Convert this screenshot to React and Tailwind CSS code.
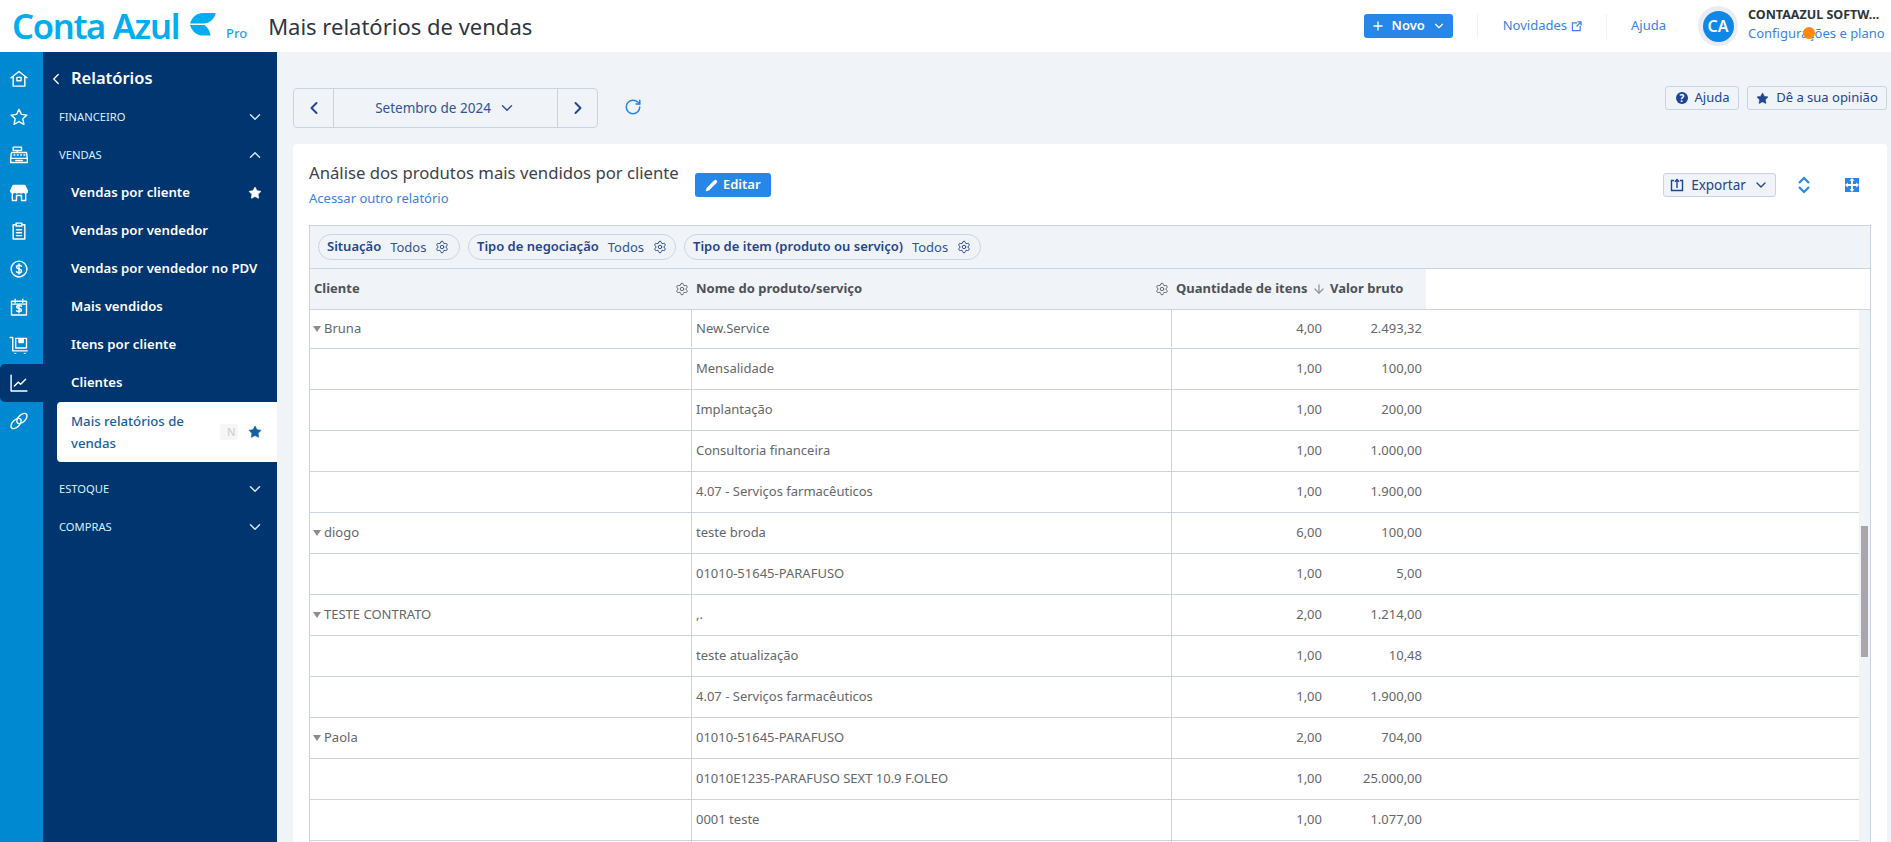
import React from "react";
import { ChevronDown, ChevronLeft, ChevronRight, ChevronUp, Plus, RotateCw, Settings, Star, ArrowDown, Pencil } from "lucide-react";

const S = ({ children, size = 20 }) => (
  <svg width={size} height={size} viewBox="0 0 24 24" fill="none" stroke="currentColor" strokeWidth="1.7" strokeLinejoin="round" strokeLinecap="round">{children}</svg>
);

const railIcons = [
  <S key="h"><path d="M2.5 10.5 12 3l9.5 7.5M5 9v11.500h14V9" /><rect x="9.500" y="10" width="5" height="4" /></S>,
  <S key="s"><path d="m12 2.800 2.900 6.100 6.600.8-4.900 4.500 1.300 6.600L12 17.500l-5.900 3.300 1.300-6.600L2.500 9.700l6.600-.8z" /></S>,
  <S key="c"><rect x="5" y="2.500" width="10" height="4" /><path d="M10 6.500v2.500M3 9h18l1 7H2zM2 16v5h20v-5M6 12h1M10 12h1M14 12h1M18 12h1M8 18.500h8" /></S>,
  <S key="m"><path d="M5 3h14l3 6.500c0 1.500-1.500 2.500-2.500 2.500S17 11 17 9.800c0 1.200-1.500 2.200-2.500 2.200S12 11 12 9.800C12 11 10.500 12 9.500 12S7 11 7 9.800C7 11 5.500 12 4.500 12S2 11 2 9.500z" fill="currentColor" /><path d="M4 12v9h5v-6h6v6h5v-9" /></S>,
  <S key="p"><path d="M8.500 4.500H5v17h14v-17h-3.500" /><rect x="8.500" y="2.500" width="7" height="3.500" /><path d="M9 10.500h6M9 14h6M9 17.500h6" /></S>,
  <S key="d"><circle cx="12" cy="12" r="9.500" /><path d="M15 8.800c-.6-1-1.700-1.300-3-1.300-1.600 0-3 .8-3 2.200 0 3 6 1.600 6 4.600 0 1.400-1.400 2.200-3 2.200-1.400 0-2.500-.4-3.100-1.400M12 6v12" /></S>,
  <S key="k"><rect x="3" y="5" width="18" height="16.500" /><path d="M7.500 2.500v4M16.500 2.500v4M3 8.500h18M15 11.200c-.6-.7-1.700-1-3-1-1.600 0-2.800.7-2.800 1.800 0 2.600 5.800 1.100 5.800 3.700 0 1.100-1.300 1.800-2.900 1.800-1.300 0-2.500-.4-3.100-1.100M12 9v10" /></S>,
  <S key="t"><path d="M1.500 3H4.500V19H22" /><rect x="8" y="4" width="13" height="11.500" /><path d="M12 4v5h5V4" fill="currentColor" /><path d="M7 22h1M18.500 22h1" /></S>,
  <S key="l"><path d="M2.500 2.500V21.500h19" /><path d="m6.500 15.500 4.500-4.500 3 2.500 6-6" /></S>,
  <S key="o"><ellipse cx="8.500" cy="15" rx="7.500" ry="4.300" transform="rotate(-45 8.500 15)" /><ellipse cx="15.500" cy="9" rx="7.500" ry="4.300" transform="rotate(-45 15.500 9)" /></S>,
];

const Gear = ({ className = "" }) => <Settings size={14} strokeWidth={1.6} className={className} />;

const Pill = ({ label, w }) => (
  <div className={`${w} h-[26px] rounded-full border border-[#c9d4e2] flex items-center pl-[8px] gap-[9px] text-[13px] text-[#23468f]`}>
    <span className="font-semibold whitespace-nowrap">{label}</span>
    <span className="text-[#2f5597] whitespace-nowrap mt-[1px]">Todos</span>
    <Gear className="shrink-0" />
  </div>
);

const NavSection = ({ label, open }) => (
  <div className="h-[38px] pl-[16px] pr-[13px] flex items-center justify-between text-[11.200px] text-[#d7f2ff] font-normal">
    <span>{label}</span>
    {open ? <ChevronUp size={18} className="text-[#cfe8f8]" /> : <ChevronDown size={18} className="text-[#cfe8f8]" />}
  </div>
);

const NavItem = ({ label, star }) => (
  <div className="h-[38px] pl-[28px] pr-[15px] flex items-center justify-between text-[13.200px] font-semibold text-white">
    <span>{label}</span>
    {star && <Star size={14} fill="currentColor" strokeWidth={1} />}
  </div>
);

const rows = [
  ["Bruna", "New.Service", "4,00", "2.493,32"],
  ["", "Mensalidade", "1,00", "100,00"],
  ["", "Implantação", "1,00", "200,00"],
  ["", "Consultoria financeira", "1,00", "1.000,00"],
  ["", "4.07 - Serviços farmacêuticos", "1,00", "1.900,00"],
  ["diogo", "teste broda", "6,00", "100,00"],
  ["", "01010-51645-PARAFUSO", "1,00", "5,00"],
  ["TESTE CONTRATO", ",.", "2,00", "1.214,00"],
  ["", "teste atualização", "1,00", "10,48"],
  ["", "4.07 - Serviços farmacêuticos", "1,00", "1.900,00"],
  ["Paola", "01010-51645-PARAFUSO", "2,00", "704,00"],
  ["", "01010E1235-PARAFUSO SEXT 10.9 F.OLEO", "1,00", "25.000,00"],
  ["", "0001 teste", "1,00", "1.077,00"],
  ["", "", "", ""],
];

export default function App() {
  return (
    <div className="w-[1891px] h-[842px] overflow-hidden flex flex-col bg-[#f0f3f8] font-['Noto_Sans',sans-serif]">
      {/* top bar */}
      <header className="h-[52px] shrink-0 bg-white flex items-center pl-[12px]">
        <span className="w-[178px] text-[34.500px] leading-none font-semibold text-[#00aeef] tracking-[-1.3px] whitespace-nowrap">Conta Azul</span>
        <svg width="26" height="25" viewBox="0 0 26 25" className="mb-[3px] text-[#00aeef]" fill="currentColor">
          <path d="M0 11.500C2 5 7 1 13 1L25.500 1C25 6 20 11.500 14 11.500Z" />
          <path d="M0 13L14.500 13C17 14.500 20 19 20.500 23.500L12 23.500C6 23.500 1.500 18 0 13Z" />
        </svg>
        <span className="ml-[10px] mt-[16px] text-[13px] font-medium text-[#1ea4de]">Pro</span>
        <h1 className="ml-[21px] text-[22px] font-normal text-[#2f3640] whitespace-nowrap">Mais relatórios de vendas</h1>
        <div className="ml-auto flex items-center">
          <button className="w-[89px] h-[24px] rounded-[3px] bg-[#2687e9] text-white flex items-center justify-center text-[13px] font-semibold gap-[7px]">
            <Plus size={14} strokeWidth={2.2} /> Novo <ChevronDown size={14} />
          </button>
          <div className="w-px h-[24px] bg-[#eef1f5] ml-[24px]" />
          <span className="ml-[25px] text-[13px] text-[#3b82e0]">Novidades</span>
          <svg width="11" height="11" viewBox="0 0 12 12" fill="none" stroke="#3b82e0" strokeWidth="1.300" className="ml-[4px]"><path d="M6.500 2H1.500V10.500H10V5.500M7 1H11V5M11 1 6 6" /></svg>
          <div className="w-px h-[24px] bg-[#eef1f5] ml-[24px]" />
          <span className="ml-[24px] text-[13px] text-[#3b82e0]">Ajuda</span>
          <div className="ml-[32px] w-[40px] h-[40px] rounded-full bg-[#e9edf1] flex items-center justify-center">
            <div className="w-[31px] h-[31px] rounded-full bg-[#0f87e6] text-white text-[16px] font-semibold flex items-center justify-center">CA</div>
          </div>
          <div className="relative ml-[10px] mb-[4px] w-[143px] flex flex-col">
            <span className="text-[12.500px] font-bold leading-[18px] text-[#2d3540] whitespace-nowrap">CONTAAZUL SOFTW...</span>
            <span className="text-[13px] leading-[18px] text-[#3b82e0] whitespace-nowrap">Configurações e plano</span>
            <span className="absolute left-[55px] top-[21px] w-[12px] h-[12px] rounded-full bg-[#ff8a00]" />
          </div>
        </div>
      </header>

      <div className="flex flex-1 min-h-0">
        {/* icon rail */}
        <nav className="w-[43px] shrink-0 bg-[#0089d0] pt-[8px] text-white flex flex-col">
          {railIcons.map((ic, i) => (
            <div key={i} className={`h-[38px] flex items-center justify-center pr-[5px] ${i === 8 ? "bg-[#00356f] rounded-l-[5px]" : ""}`}>{ic}</div>
          ))}
        </nav>

        {/* menu */}
        <aside className="w-[234px] shrink-0 bg-[#00356f] pt-[8px] text-white">
          <div className="h-[38px] pl-[4px] pb-[1px] flex items-center gap-[6px] text-[16.500px] font-semibold">
            <ChevronLeft size={18} strokeWidth={1.8} />
            <span>Relatórios</span>
          </div>
          <NavSection label="FINANCEIRO" />
          <NavSection label="VENDAS" open />
          <NavItem label="Vendas por cliente" star />
          <NavItem label="Vendas por vendedor" />
          <NavItem label="Vendas por vendedor no PDV" />
          <NavItem label="Mais vendidos" />
          <NavItem label="Itens por cliente" />
          <NavItem label="Clientes" />
          <div className="ml-[14px] mb-[8px] h-[60px] bg-white rounded-l-[4px] pl-[14px] pr-[15px] flex items-center justify-between text-[13.200px] text-[#17609f] font-medium">
            <span className="w-[125px] leading-[22px]">Mais relatórios de vendas</span>
            <div className="flex items-center gap-[10px]">
              <div className="w-[18px] h-[16px] rounded-[3px] bg-[#f6f6f8] text-[11px] leading-[16px] text-[#d0d0d4] pl-[7px]">N</div>
              <Star size={14} fill="currentColor" strokeWidth={1} />
            </div>
          </div>
          <NavSection label="ESTOQUE" />
          <NavSection label="COMPRAS" />
        </aside>

        {/* content */}
        <main className="flex-1 min-w-0 pl-[16px] pr-[4px] flex flex-col">
          <div className="h-[92px] shrink-0 flex items-start pt-[34px]">
            <div className="mt-[2px] w-[305px] h-[40px] rounded-[4px] border border-[#c9d4e2] flex items-center text-[#2f5597]">
              <div className="w-[40px] h-full border-r border-[#c9d4e2] flex items-center justify-center text-[#23468f]"><ChevronLeft size={20} strokeWidth={2.4} /></div>
              <div className="flex-1 h-full flex items-center justify-center gap-[7px] text-[13.500px]">Setembro de 2024 <ChevronDown size={18} /></div>
              <div className="w-[40px] h-full border-l border-[#c9d4e2] flex items-center justify-center text-[#23468f]"><ChevronRight size={20} strokeWidth={2.4} /></div>
            </div>
            <RotateCw size={18} strokeWidth={2} className="mt-[12px] ml-[26px] text-[#2687e9]" />
            <div className="ml-auto flex gap-[8px] text-[13px] text-[#23468f]">
              <button className="w-[74px] h-[24px] rounded-[3px] border border-[#c9d4e2] flex items-center justify-center gap-[6px]">
                <svg width="14" height="14" viewBox="0 0 14 14"><circle cx="7" cy="7" r="6" fill="#1b4697" /><text x="7" y="10.500" textAnchor="middle" fontSize="10" fontWeight="700" fill="#fff">?</text></svg>
                Ajuda
              </button>
              <button className="w-[140px] h-[24px] rounded-[3px] border border-[#c9d4e2] flex items-center justify-center gap-[7px]">
                <Star size={13} fill="currentColor" strokeWidth={1} /> Dê a sua opinião
              </button>
            </div>
          </div>

          <section className="flex-1 min-h-0 bg-white rounded-t-[4px] px-[16px] flex flex-col">
            <div className="h-[81px] shrink-0 flex items-start pt-[19px]">
              <div className="flex flex-col">
                <span className="text-[16.700px] leading-[20px] text-[#3d434b] whitespace-nowrap">Análise dos produtos mais vendidos por cliente</span>
                <span className="mt-[5px] text-[13px] leading-[20px] text-[#3b82e0]">Acessar outro relatório</span>
              </div>
              <button className="ml-[16px] mt-[10px] w-[76px] h-[24px] rounded-[3px] bg-[#2687e9] text-white text-[13px] font-semibold flex items-center justify-center gap-[5px]">
                <Pencil size={13} fill="currentColor" strokeWidth={1} /> Editar
              </button>
              <div className="ml-auto mt-[10px] flex items-center">
                <button className="w-[113px] h-[24px] rounded-[3px] border border-[#c9d4e2] bg-[#f0f3f8] text-[#23468f] text-[13.500px] flex items-center justify-center gap-[7px]">
                  <svg width="14" height="14" viewBox="0 0 14 14" fill="none" stroke="#1b4697" strokeWidth="1.400"><path d="M4 2.500H1.500V12.500H12.500V2.500H10M7 10V1.500M4.800 3.700 7 1.500l2.200 2.200" /></svg>
                  Exportar <ChevronDown size={16} />
                </button>
                <svg width="14" height="18" viewBox="0 0 14 18" fill="none" stroke="#2687e9" strokeWidth="2.200" className="ml-[21px]"><path d="M2 7 7 2l5 5M2 11l5 5 5-5" /></svg>
                <svg width="14" height="14" viewBox="0 0 14 14" className="ml-[34px] mr-[12px]"><path d="M0 0H14V14H0Z" fill="#2687e9" /><path d="M7 0 9.500 2.800H4.500ZM7 14 9.500 11.200H4.500ZM0 7 2.800 4.500V9.500ZM14 7 11.200 4.500V9.500Z" fill="#fff" /><path d="M7 2V12M2 7H12" stroke="#fff" strokeWidth="1.800" /></svg>
              </div>
            </div>

            {/* table */}
            <div className="flex-1 min-h-0 border-x border-t border-[#c9d4e2] flex flex-col overflow-hidden">
              <div className="h-[43px] shrink-0 bg-[#f0f3f8] border-b border-[#c9d4e2] pl-[8px] flex items-center gap-[8px]">
                <Pill label="Situação" w="w-[142px]" />
                <Pill label="Tipo de negociação" w="w-[208px]" />
                <Pill label="Tipo de item (produto ou serviço)" w="w-[297px]" />
              </div>
              <div className="h-[41px] shrink-0 bg-white border-b border-[#c9d4e2] flex text-[13px] font-bold text-[#4d5158]">
                <div className="w-[1116px] h-full bg-[#f0f3f8] grid grid-cols-[382px_480px_155px_99px]">
                  <div className="flex items-center justify-between pl-[4px] pr-[3px]">Cliente <Gear className="text-[#5b5f66]" /></div>
                  <div className="flex items-center justify-between pl-[4px] pr-[3px]">Nome do produto/serviço <Gear className="text-[#5b5f66]" /></div>
                  <div className="flex items-center pl-[4px] gap-[5px] whitespace-nowrap">Quantidade de itens <ArrowDown size={14} className="text-[#8a8f96]" /></div>
                  <div className="flex items-center pl-[3px] whitespace-nowrap">Valor bruto</div>
                </div>
              </div>
              <div className="flex flex-1 min-h-0">
                <div className="flex-1 min-w-0 text-[13px] text-[#64676c]">
                  {rows.map((r, i) => (
                    <div key={i} className={`${i === 0 ? "h-[39px] pb-[1px]" : "h-[41px]"} border-b border-[#c9d4e2] grid grid-cols-[382px_480px_155px_99px_1fr]`}>
                      <div className="flex items-center border-r border-[#c9d4e2] pl-[3px] gap-[3px]">
                        {r[0] && <span className="w-0 h-0 border-x-[4px] border-x-transparent border-t-[6px] border-t-[#8c8c8c]" />}
                        <span>{r[0]}</span>
                      </div>
                      <div className="flex items-center border-r border-[#c9d4e2] pl-[4px] whitespace-nowrap">{r[1]}</div>
                      <div className="flex items-center justify-end pr-[5px]">{r[2]}</div>
                      <div className="flex items-center justify-end pr-[4px]">{r[3]}</div>
                      <div />
                    </div>
                  ))}
                </div>
                <div className="w-[11px] shrink-0 bg-[#f0f3f8] pl-[2px]">
                  <div className="mt-[216px] w-[7px] h-[131px] bg-[#a6a6ab]" />
                </div>
              </div>
            </div>
          </section>
        </main>
      </div>
    </div>
  );
}
